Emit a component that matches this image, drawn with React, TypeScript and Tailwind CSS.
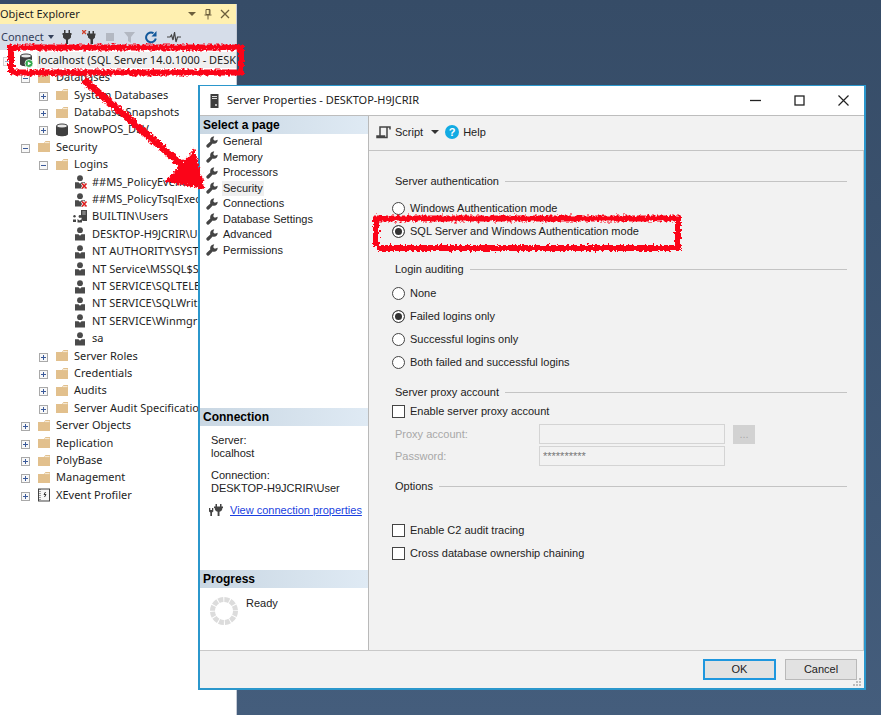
import React from "react";
import clsx from "clsx";

type Level = 0 | 1 | 2 | 3;
type IconName = "server" | "folder" | "db" | "user" | "userOff" | "group" | "xevent";

interface TreeRow {
  level: Level;
  icon: IconName;
  text: string;
  open?: boolean;
}

const rows: TreeRow[] = [
  { level: 0, icon: "server", text: "localhost (SQL Server 14.0.1000 - DESK", open: true },
  { level: 1, icon: "folder", text: "Databases", open: true },
  { level: 2, icon: "folder", text: "System Databases" },
  { level: 2, icon: "folder", text: "Database Snapshots" },
  { level: 2, icon: "db", text: "SnowPOS_DEV" },
  { level: 1, icon: "folder", text: "Security", open: true },
  { level: 2, icon: "folder", text: "Logins", open: true },
  { level: 3, icon: "userOff", text: "##MS_PolicyEvent" },
  { level: 3, icon: "userOff", text: "##MS_PolicyTsqlExec" },
  { level: 3, icon: "group", text: "BUILTIN\\Users" },
  { level: 3, icon: "user", text: "DESKTOP-H9JCRIR\\U" },
  { level: 3, icon: "user", text: "NT AUTHORITY\\SYST" },
  { level: 3, icon: "user", text: "NT Service\\MSSQL$S" },
  { level: 3, icon: "user", text: "NT SERVICE\\SQLTELE" },
  { level: 3, icon: "user", text: "NT SERVICE\\SQLWrit" },
  { level: 3, icon: "user", text: "NT SERVICE\\Winmgr" },
  { level: 3, icon: "user", text: "sa" },
  { level: 2, icon: "folder", text: "Server Roles" },
  { level: 2, icon: "folder", text: "Credentials" },
  { level: 2, icon: "folder", text: "Audits" },
  { level: 2, icon: "folder", text: "Server Audit Specificatio" },
  { level: 1, icon: "folder", text: "Server Objects" },
  { level: 1, icon: "folder", text: "Replication" },
  { level: 1, icon: "folder", text: "PolyBase" },
  { level: 1, icon: "folder", text: "Management" },
  { level: 1, icon: "xevent", text: "XEvent Profiler" },
];

const indent: Record<Level, string> = {
  0: "pl-[3px]",
  1: "pl-[21px]",
  2: "pl-[39px]",
  3: "pl-[57px]",
};

const pages = [
  "General",
  "Memory",
  "Processors",
  "Security",
  "Connections",
  "Database Settings",
  "Advanced",
  "Permissions",
];

const DbShape = () => (
  <>
    <path d="M1 3v8c0 3 12 3 12 0V3z" fill="#3f3f3f" />
    <ellipse cx="7" cy="3" rx="5.5" ry="2" fill="#e8e8e8" stroke="#3f3f3f" />
  </>
);

const Person = () => (
  <>
    <circle cx="7" cy="3.2" r="2.9" fill="#4a4a4a" />
    <path d="M2 7.300h3.500L7 8.800l1.500-1.500H12V13.500H2z" fill="#4a4a4a" />
  </>
);

const TreeIcon = ({ name }: { name: IconName }) => (
  <svg viewBox="0 0 14 14" className="h-3.5 w-3.5 shrink-0 overflow-visible">
    {name === "folder" && (
      <>
        <path d="M1 3h6l1.500-2H13v11H1z" fill="#e2c08d" />
        <path d="M8 2.600h4.500" stroke="#f8eedc" strokeWidth="1" />
      </>
    )}
    {name === "db" && <DbShape />}
    {name === "server" && (
      <>
        <DbShape />
        <circle cx="10" cy="10.5" r="4" fill="#2fa84a" stroke="#fff" strokeWidth="0.8" />
        <path d="M8.800 8.400v4.200l3.400-2.100z" fill="#fff" />
      </>
    )}
    {name === "user" && <Person />}
    {name === "userOff" && (
      <>
        <Person />
        <path d="M9 8.500l4.500 5M13.500 8.500l-4.500 5" stroke="#fff" strokeWidth="3" />
        <path d="M9 8.500l4.500 5M13.500 8.500l-4.500 5" stroke="#dd1c1c" strokeWidth="1.600" />
      </>
    )}
    {name === "group" && (
      <>
        <path d="M8 0h6v11H9.500L8 7z" fill="#444" />
        <path d="M9.300 2h3.400M9.300 4h3.400" stroke="#ddd" strokeWidth="0.8" />
        <circle cx="7" cy="6.5" r="1.4" fill="#444" />
        <circle cx="1.5" cy="6.3" r="1.2" fill="#444" />
        <path d="M0 9.500h3V12H0zM4.500 9l2 1.500L9 9v3.500H4.500z" fill="#444" />
      </>
    )}
    {name === "xevent" && (
      <>
        <rect x="1.5" y="1" width="11" height="12" fill="#f7f7f7" stroke="#444" />
        <path d="M3 1v12" stroke="#444" strokeDasharray="1 1" />
        <path d="M8.500 4L7 6.500h2L7.500 9" fill="none" stroke="#333" strokeWidth="1" />
      </>
    )}
  </svg>
);

const Expander = ({ row }: { row: TreeRow }) => {
  if (row.level === 3) return <span className="w-[9px] shrink-0" />;
  return (
    <button
      aria-label={row.open ? "Collapse" : "Expand"}
      className={clsx(
        "mt-0.5 h-[9px] w-[9px] shrink-0 border border-[#a9a9a9] bg-[#f8f8f8]",
        row.level === 0 && "opacity-50"
      )}
    >
      <svg viewBox="0 0 7 7" className="block h-[7px] w-[7px]">
        <path d={row.open ? "M1 3.500h5" : "M1 3.500h5M3.500 1v5"} stroke="#3b5a9a" strokeWidth="1" />
      </svg>
    </button>
  );
};

const Plug = () => (
  <svg viewBox="0 0 10 14" className="h-3.5 w-2.5">
    <path d="M2 0h1.500v3h3V0H8v3h1.500v2H9v2.500L6.800 9.500H6V14H4V9.500h-.8L1 7.500V5H.5V3H2z" fill="#3c3c3c" />
  </svg>
);

const Explorer = () => (
  <aside className="mt-1 flex w-[237px] flex-col overflow-hidden border-r border-[#c5cbd6] bg-white font-['Noto_Sans','Open_Sans',sans-serif] text-[11px] text-[#1e1e1e]">
    <header className="flex h-5 items-center bg-[#fff0b0] pr-1.5">
      <h2 className="flex-1 whitespace-nowrap">Object Explorer</h2>
      <div className="flex items-center gap-2">
        <button aria-label="Window position">
          <svg viewBox="0 0 8 8" className="h-2 w-2">
            <path d="M0 2h8L4 6z" fill="#6c5f3c" />
          </svg>
        </button>
        <button aria-label="Pin">
          <svg viewBox="0 0 8 12" className="h-3 w-2" fill="none" stroke="#6c5f3c">
            <path d="M2 1.500h4v5H2zM5.300 1.500v5M.5 7h7M4 7v4.500" />
          </svg>
        </button>
        <button aria-label="Close">
          <svg viewBox="0 0 10 10" className="h-2.5 w-2.5" stroke="#6c5f3c" strokeWidth="1.3">
            <path d="M1 1l8 8M9 1L1 9" />
          </svg>
        </button>
      </div>
    </header>
    <div className="flex h-[26px] items-center bg-[#d6dde9]">
      <button className="flex items-center gap-1 pl-px whitespace-nowrap text-[#34405a]">
        Connect
        <svg viewBox="0 0 6 4" className="h-1 w-1.5">
          <path d="M0 0h6L3 4z" fill="#34405a" />
        </svg>
      </button>
      <div className="ml-2 flex items-center gap-2.5">
        <button aria-label="Connect Object Explorer">
          <Plug />
        </button>
        <button aria-label="Disconnect">
          <svg viewBox="0 0 14 14" className="h-3.5 w-3.5">
            <path d="M0 0l4 4M4 0L0 4" stroke="#d0402b" strokeWidth="1.300" />
            <path d="M6.500 1H8v2.500h2.500V1H12v2.500h1.500v2H13v2l-2 2V14H8.500V9.500l-2.500-2v-2H5v-2h1.500z" fill="#3c3c3c" />
          </svg>
        </button>
        <button aria-label="Stop" disabled>
          <span className="block h-2 w-2 bg-[#b3b8c2]" />
        </button>
        <button aria-label="Filter" disabled>
          <svg viewBox="0 0 11 12" className="h-3 w-[11px]">
            <path d="M0 1h11L7 6v6L4 10V6z" fill="#b3b8c2" />
          </svg>
        </button>
        <button aria-label="Refresh">
          <svg viewBox="0 0 12 14" className="h-3.5 w-3" fill="none">
            <path d="M10.800 8.500A4.900 4.900 0 1 1 8.500 3.200" stroke="#12589b" strokeWidth="2" />
            <path d="M11.500 1v5.500H6.500z" fill="#12589b" />
          </svg>
        </button>
        <button aria-label="Activity Monitor">
          <svg viewBox="0 0 14 12" className="h-3 w-3.5" fill="none" stroke="#444" strokeWidth="1.200">
            <path d="M0 6h3l1.500-2L6 9l1.500-8L9 11l1.500-5H14" />
          </svg>
        </button>
      </div>
    </div>
    <ul className="flex-1 pt-px [&>li]:h-[17px] [&>li:nth-child(5n+1)]:h-[18px] [&>li:nth-child(5n+3)]:h-[18px]">
      {rows.map((row) => (
        <li key={row.text} className={clsx("flex items-center", indent[row.level])}>
          <Expander row={row} />
          <span className="w-[7px] shrink-0" />
          <TreeIcon name={row.icon} />
          <span
            className={clsx(
              "ml-1 pl-px whitespace-nowrap",
              row.level === 0 && "flex-1 bg-[#f0f0f0]"
            )}
          >
            {row.text}
          </span>
        </li>
      ))}
    </ul>
  </aside>
);

const PaneTitle = ({ children }: { children: React.ReactNode }) => (
  <h3 className="h-[18px] bg-linear-to-r from-[#c9d7e3] to-[#dfeaf4] pl-[3px] text-[12px] leading-[18px] font-bold text-black">
    {children}
  </h3>
);

const Wrench = () => (
  <svg viewBox="0 0 12 12" className="h-3 w-3 shrink-0">
    <path
      d="M1 11.200a1.700 1.700 0 0 1-.2-2.400L4.300 5.500C3.600 2.800 5.300.6 8.200.3L7.200 3.200 8.800 4.800 11.700 3.800c0 2.900-2.300 4.600-5 3.800L3.400 11.100a1.700 1.700 0 0 1-2.400.1z"
      fill="#444"
    />
  </svg>
);

const Sidebar = () => (
  <div className="flex w-[169px] shrink-0 flex-col border-r border-[#b9b9b9] bg-white">
    <PaneTitle>Select a page</PaneTitle>
    <ul className="flex-1">
      {pages.map((page) => (
        <li key={page} className="flex h-[15px] items-center gap-1 pl-1.5 even:h-4">
          <Wrench />
          <button className={clsx("h-[15px] px-px leading-[15px]", page === "Security" && "bg-[#f0f0f0]")}>{page}</button>
        </li>
      ))}
    </ul>
    <section className="h-[162px]">
      <PaneTitle>Connection</PaneTitle>
      <dl className="pt-2 pl-[11px] leading-[13px]">
        <dt>Server:</dt>
        <dd className="mb-[9px]">localhost</dd>
        <dt>Connection:</dt>
        <dd>DESKTOP-H9JCRIR\User</dd>
      </dl>
      <div className="mt-[7px] flex items-center gap-[7px] pl-[9px]">
        <svg viewBox="0 0 14 14" className="h-3.5 w-3.5">
          <path d="M0 5h1.300v2h1.700V5h1.300v3.500L3 9.500V13H1.300V9.500L0 8.500zM6.500 1H8v2.500h3V1h1.500v2.500H14V5h-.6c0 2-1 3.300-2.900 3.700V13H8.600V8.700C6.700 8.300 5.700 7 5.700 5H5V3.500h1.500z" fill="#444" />
        </svg>
        <a href="#connection" className="text-[#1a3fe0] underline">
          View connection properties
        </a>
      </div>
    </section>
    <section className="h-20">
      <PaneTitle>Progress</PaneTitle>
      <div className="flex gap-[7px] pt-2 pl-[9px]">
        <svg viewBox="0 0 30 30" className="h-[30px] w-[30px]">
          <circle cx="15" cy="15" r="11.5" fill="none" stroke="#dcdcdc" strokeWidth="5" strokeDasharray="5 1.020" />
        </svg>
        <span className="leading-[15px]">Ready</span>
      </div>
    </section>
  </div>
);

const Group = ({ title, children, className }: { title: string; children: React.ReactNode; className?: string }) => (
  <fieldset className={className}>
    <legend className="flex w-full items-center gap-1.5 leading-[14px]">
      {title}
      <span className="h-px flex-1 bg-[#c4c4c4]" />
    </legend>
    {children}
  </fieldset>
);

const Radio = ({ name, label, checked }: { name: string; label: string; checked?: boolean }) => (
  <label className="-ml-[3px] flex h-[23px] items-center gap-[5px]">
    <input
      type="radio"
      name={name}
      defaultChecked={checked}
      className="h-[13px] w-[13px] appearance-none rounded-full border border-[#444] bg-white checked:bg-[#333] checked:shadow-[inset_0_0_0_2px_white]"
    />
    {label}
  </label>
);

const Check = ({ label }: { label: string }) => (
  <label className="-ml-[3px] flex h-[23px] items-center gap-[5px]">
    <input type="checkbox" className="h-[13px] w-[13px] appearance-none border border-[#444] bg-white checked:bg-[#333]" />
    {label}
  </label>
);

const Settings = () => (
  <form className="flex-1 border-r border-[#c9c9c9] pt-[23px] pr-4 pl-[26px]">
    <Group title="Server authentication">
      <div className="pt-[9px]">
        <Radio name="auth" label="Windows Authentication mode" />
        <Radio name="auth" label="SQL Server and Windows Authentication mode" checked />
      </div>
    </Group>
    <Group title="Login auditing" className="mt-[19px]">
      <div className="pt-1.5">
        <Radio name="audit" label="None" />
        <Radio name="audit" label="Failed logins only" checked />
        <Radio name="audit" label="Successful logins only" />
        <Radio name="audit" label="Both failed and successful logins" />
      </div>
    </Group>
    <Group title="Server proxy account" className="mt-[11px]">
      <div className="pt-px">
        <Check label="Enable server proxy account" />
      </div>
      <div className="mt-px grid grid-cols-[144px_186px_30px] items-center gap-y-0.5 text-[#a8a8a8]">
        <label htmlFor="proxy">Proxy account:</label>
        <input id="proxy" disabled className="h-5 border border-[#d4d4d4] px-1" />
        <button type="button" disabled className="ml-2 h-[19px] w-[22px] bg-[#d2d2d2] text-[#aaa]">
          ...
        </button>
        <label htmlFor="password">Password:</label>
        <input
          id="password"
          disabled
          defaultValue="**********"
          className="h-5 border border-[#d4d4d4] px-[3px] text-[#777]"
        />
      </div>
    </Group>
    <Group title="Options" className="mt-[13px]">
      <div className="pt-[26px]">
        <Check label="Enable C2 audit tracing" />
        <Check label="Cross database ownership chaining" />
      </div>
    </Group>
  </form>
);

const PropertiesDialog = () => (
  <div
    role="dialog"
    aria-label="Server Properties"
    className="absolute top-[85px] right-[15px] bottom-[25px] left-[198px] flex flex-col border-2 border-t border-[#2b97cc] bg-[#f2f2f2] font-['Liberation_Sans',Arial,sans-serif] text-[11px] text-[#222]"
  >
    <header className="flex h-[30px] shrink-0 items-center border-b border-[#bdbdbd] bg-white pr-[15px] pl-[10px]">
      <svg viewBox="0 0 9 14" className="h-3.5 w-[9px]">
        <rect x=".5" width="8" height="14" fill="#3d3d3d" />
        <path d="M2 2.500h5M2 4.500h5" stroke="#ddd" strokeWidth="1" />
        <rect x="5" y="10" width="2" height="2" fill="#bbb" />
      </svg>
      <h1 className="ml-2 flex-1 font-['Noto_Sans','Open_Sans',sans-serif]">Server Properties - DESKTOP-H9JCRIR</h1>
      <div className="flex items-center gap-[33px]">
        <button aria-label="Minimize">
          <svg viewBox="0 0 11 11" className="h-[11px] w-[11px]">
            <path d="M0 5.500h11" stroke="#222" strokeWidth="1.300" />
          </svg>
        </button>
        <button aria-label="Maximize">
          <svg viewBox="0 0 11 11" className="h-[11px] w-[11px]">
            <rect x="1" y="1" width="9" height="9" fill="none" stroke="#222" strokeWidth="1.300" />
          </svg>
        </button>
        <button aria-label="Close">
          <svg viewBox="0 0 11 11" className="h-[11px] w-[11px]">
            <path d="M.5.5l10 10M10.500.5l-10 10" stroke="#222" strokeWidth="1.200" />
          </svg>
        </button>
      </div>
    </header>
    <div className="flex min-h-0 flex-1 border-b border-[#c9c9c9]">
      <Sidebar />
      <main className="flex min-w-0 flex-1 flex-col">
        <div className="flex h-[35px] shrink-0 items-center border-b border-[#c4c4c4] pb-0.5 pl-[7px]">
          <button className="flex items-center gap-1">
            <svg viewBox="0 0 15 13" className="h-[13px] w-[15px]" fill="none" stroke="#444" strokeWidth="1.500">
              <path d="M4 10V1h10v2.500M11 1v10.500H1V10h7.500v1.500" />
            </svg>
            Script
          </button>
          <button aria-label="Script options" className="ml-2">
            <svg viewBox="0 0 8 4" className="h-1 w-2">
              <path d="M0 0h8L4 4z" fill="#333" />
            </svg>
          </button>
          <button className="ml-1.5 flex items-center gap-1">
            <span className="h-3.5 w-3.5 rounded-full bg-[#12abe3] text-center leading-[14px] font-bold text-white">?</span>
            Help
          </button>
        </div>
        <Settings />
      </main>
    </div>
    <footer className="relative flex h-[37px] shrink-0 items-center justify-end gap-[9px] pr-[7px]">
      <button className="h-[21px] w-[73px] border-2 border-[#1f97de] bg-[#e2e2e2]">OK</button>
      <button className="h-[21px] w-[72px] border border-[#b9b9b9] bg-[#e2e2e2]">Cancel</button>
      <svg viewBox="0 0 9 9" className="absolute right-0.5 bottom-px h-[9px] w-[9px]" fill="#bcbcbc">
        <path d="M6 0h2v2H6zM3 3h2v2H3zM6 3h2v2H6zM0 6h2v2H0zM3 6h2v2H3zM6 6h2v2H6z" />
      </svg>
    </footer>
  </div>
);

// red marker strokes drawn over both windows
const Marker = () => (
  <svg
    width="700"
    height="260"
    className="pointer-events-none absolute top-0 left-0"
    fill="none"
    stroke="#fb0418"
    strokeWidth="6"
    aria-hidden="true"
  >
    <filter id="rough" filterUnits="userSpaceOnUse" x="0" y="0" width="700" height="260" colorInterpolationFilters="sRGB">
      <feTurbulence type="fractalNoise" baseFrequency="0.4" numOctaves="2" seed="4" />
      <feDisplacementMap in="SourceGraphic" scale="6" xChannelSelector="R" yChannelSelector="G" />
    </filter>
    <g filter="url(#rough)">
      <path d="M8 47.500H243M11 45v27M10 72.500H244M241 46v28" />
      <path d="M373 218.500H681M376 216v30M377 248H681M678 216v34" />
      <path d="M84 80L182 165" strokeWidth="7" />
      <path d="M204 188L167 181L194 151z" fill="#fb0418" strokeWidth="2" />
    </g>
  </svg>
);

const App = () => {
  return (
    <div className="relative flex min-h-screen overflow-hidden bg-linear-to-b from-[#364c67] to-[#445d7c]">
      <Explorer />
      <PropertiesDialog />
      <Marker />
    </div>
  );
};

export default App;
